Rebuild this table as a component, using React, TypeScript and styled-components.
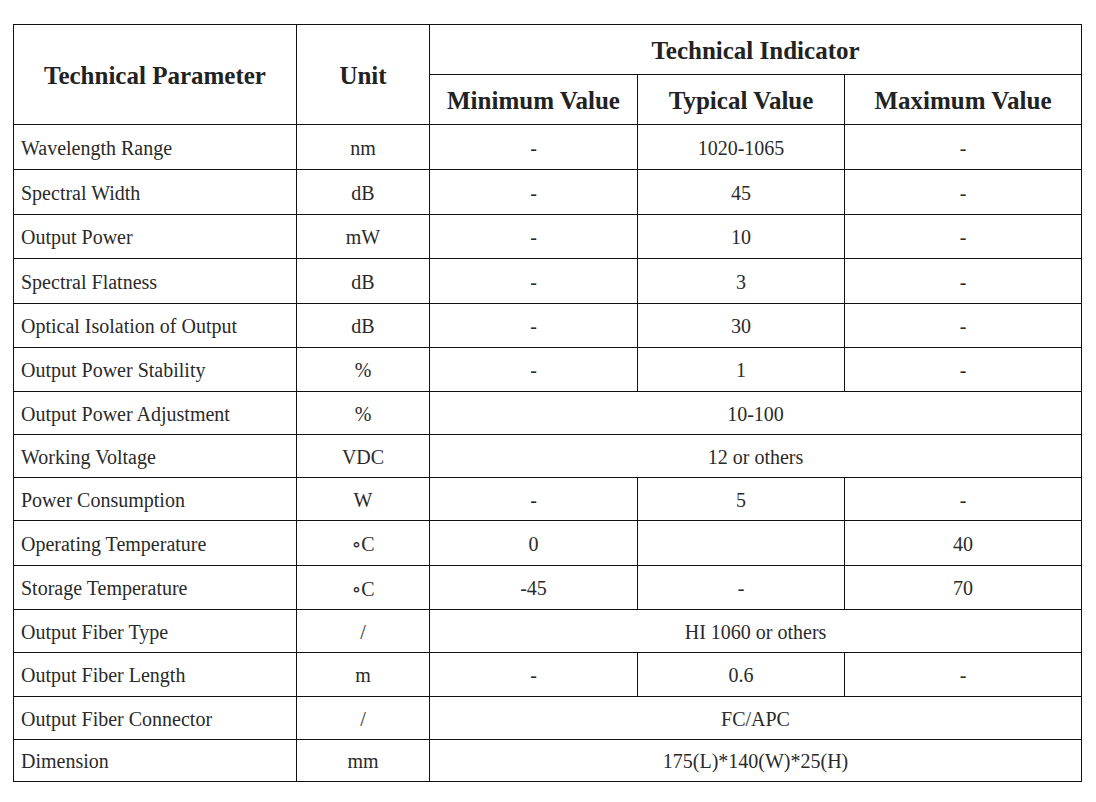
import styled, { createGlobalStyle } from "styled-components"

const GlobalStyle = createGlobalStyle`
  html, body {
    margin: 0;
    padding: 0;
    background: #ffffff;
  }
  body {
    font-family: "Liberation Serif", "DejaVu Serif", serif;
    color: #222222;
  }
`

type Row = {
  name: string
  unit: string
  min?: string
  typ?: string
  max?: string
  merged?: string
  h: number
}

const rows: Row[] = [
  { name: "Wavelength Range", unit: "nm", min: "-", typ: "1020-1065", max: "-", h: 45 },
  { name: "Spectral Width", unit: "dB", min: "-", typ: "45", max: "-", h: 45 },
  { name: "Output Power", unit: "mW", min: "-", typ: "10", max: "-", h: 44 },
  { name: "Spectral Flatness", unit: "dB", min: "-", typ: "3", max: "-", h: 45 },
  { name: "Optical Isolation of Output", unit: "dB", min: "-", typ: "30", max: "-", h: 44 },
  { name: "Output Power Stability", unit: "%", min: "-", typ: "1", max: "-", h: 44 },
  { name: "Output Power Adjustment", unit: "%", merged: "10-100", h: 43 },
  { name: "Working Voltage", unit: "VDC", merged: "12 or others", h: 43 },
  { name: "Power Consumption", unit: "W", min: "-", typ: "5", max: "-", h: 43 },
  { name: "Operating Temperature", unit: "∘C", min: "0", typ: "", max: "40", h: 45 },
  { name: "Storage Temperature", unit: "∘C", min: "-45", typ: "-", max: "70", h: 44 },
  { name: "Output Fiber Type", unit: "/", merged: "HI 1060 or others", h: 43 },
  { name: "Output Fiber Length", unit: "m", min: "-", typ: "0.6", max: "-", h: 44 },
  { name: "Output Fiber Connector", unit: "/", merged: "FC/APC", h: 43 },
  { name: "Dimension", unit: "mm", merged: "175(L)*140(W)*25(H)", h: 42 },
]

export default function App() {
  return (
    <Page>
      <GlobalStyle />
      <Table>
        <colgroup>
          <col style={{ width: 283 }} />
          <col style={{ width: 133 }} />
          <col style={{ width: 208 }} />
          <col style={{ width: 207 }} />
          <col style={{ width: 237 }} />
        </colgroup>
        <thead>
          <HeadRow>
            <Th rowSpan={2}>Technical Parameter</Th>
            <Th rowSpan={2}>Unit</Th>
            <Th colSpan={3}>Technical Indicator</Th>
          </HeadRow>
          <HeadRow>
            <Th>Minimum Value</Th>
            <Th>Typical Value</Th>
            <Th>Maximum Value</Th>
          </HeadRow>
        </thead>
        <tbody>
          {rows.map((r) => (
            <tr key={r.name} style={{ height: r.h }}>
              <Td $left>{r.name}</Td>
              <Td>{r.unit}</Td>
              {r.merged !== undefined ? (
                <Td colSpan={3}>{r.merged}</Td>
              ) : (
                <>
                  <Td>{r.min}</Td>
                  <Td>{r.typ}</Td>
                  <Td>{r.max}</Td>
                </>
              )}
            </tr>
          ))}
        </tbody>
      </Table>
    </Page>
  )
}

const Page = styled.div`
  padding: 24px 0 0 13px;
  width: 1096px;
  height: 802px;
  box-sizing: border-box;
`

const Table = styled.table`
  border-collapse: collapse;
  table-layout: fixed;
  width: 1069px;
`

const HeadRow = styled.tr`
  height: 50px;
`

const Th = styled.th`
  border: 1px solid #111111;
  padding: 2px 0 0;
  font-size: 25px;
  font-weight: bold;
  text-align: center;
  vertical-align: middle;
  color: #222222;
`

const Td = styled.td<{ $left?: boolean }>`
  border: 1px solid #111111;
  padding: 2px ${(p) => (p.$left ? "7px" : "0")} 0;
  font-size: 20px;
  text-align: ${(p) => (p.$left ? "left" : "center")};
  vertical-align: middle;
  color: #2a2a2a;
`
